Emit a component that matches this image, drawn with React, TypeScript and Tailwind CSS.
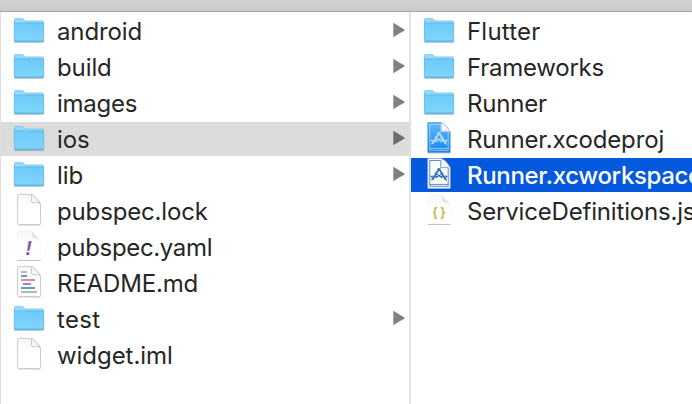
type Kind = "folder" | "blank" | "yaml" | "markdown" | "project" | "workspace" | "json";

interface Entry {
  name: string;
  kind: Kind;
  tracking: string;
  selection?: "gray" | "blue";
}

const left: Entry[] = [
  { name: "android", kind: "folder", tracking: "tracking-[-0.12px]" },
  { name: "build", kind: "folder", tracking: "tracking-[-0.1px]" },
  { name: "images", kind: "folder", tracking: "tracking-[-0.25px]" },
  { name: "ios", kind: "folder", tracking: "tracking-[-0.1px]", selection: "gray" },
  { name: "lib", kind: "folder", tracking: "tracking-[-0.1px]" },
  { name: "pubspec.lock", kind: "blank", tracking: "tracking-[-0.15px]" },
  { name: "pubspec.yaml", kind: "yaml", tracking: "tracking-[-0.34px]" },
  { name: "README.md", kind: "markdown", tracking: "tracking-[-0.15px]" },
  { name: "test", kind: "folder", tracking: "tracking-[0.3px]" },
  { name: "widget.iml", kind: "blank", tracking: "tracking-[-0.05px]" },
];

const right: Entry[] = [
  { name: "Flutter", kind: "folder", tracking: "tracking-[0.2px]" },
  { name: "Frameworks", kind: "folder", tracking: "tracking-[-0.25px]" },
  { name: "Runner", kind: "folder", tracking: "tracking-[-0.2px]" },
  { name: "Runner.xcodeproj", kind: "project", tracking: "tracking-[-0.14px]" },
  { name: "Runner.xcworkspace", kind: "workspace", tracking: "tracking-[-0.34px]", selection: "blue" },
  { name: "ServiceDefinitions.json", kind: "json", tracking: "tracking-[-0.18px]" },
];

function Gradients() {
  return (
    <svg className="absolute size-0" aria-hidden="true">
      <defs>
        <linearGradient id="folderFront" x1="0" y1="0" x2="0" y2="1">
          <stop offset="0" stopColor="#6dcbf8" />
          <stop offset="1" stopColor="#82d5fb" />
        </linearGradient>
        <linearGradient id="paper" x1="0" y1="0" x2="0" y2="1">
          <stop offset="0" stopColor="#f7f7f7" />
          <stop offset="0.5" stopColor="#ffffff" />
        </linearGradient>
        <linearGradient id="blueprint" x1="0" y1="0" x2="0" y2="1">
          <stop offset="0" stopColor="#5dbcf8" />
          <stop offset="1" stopColor="#1a82f4" />
        </linearGradient>
        <linearGradient id="faintFold" x1="0" y1="1" x2="1" y2="0">
          <stop offset="0" stopColor="#d4d4d4" />
          <stop offset="0.6" stopColor="#f4f4f4" />
        </linearGradient>
      </defs>
    </svg>
  );
}

function Folder() {
  return (
    <svg className="size-8" viewBox="0 0 32 32">
      <path d="M1.5 28.600h29" stroke="#000" strokeOpacity=".2" />
      <path d="M1 5.500Q1 4.200 2.300 4.200H9q1 0 1.600.8l1 1.200q.5.600 1.400.6h16.600Q31 6.800 31 8v19H1z" fill="#93d9f9" />
      <path d="M1.800 4.400H9.300L12 7H30" stroke="#78bfe2" strokeWidth=".6" fill="none" />
      <path d="M1 9h30v17.700q0 1.300-1.300 1.300H2.300Q1 28 1 26.700z" fill="url(#folderFront)" />
      <path d="M1 9h30" stroke="#5cb3df" strokeWidth=".7" />
      <path d="M1.400 26.500h29.200" stroke="#62bce8" strokeWidth=".6" />
      <path d="M1.500 27.700h29" stroke="#4da4d3" strokeWidth=".7" />
      <path d="M1.300 6v21.300M30.700 9v18.300" stroke="#5db4de" strokeWidth=".6" />
    </svg>
  );
}

function Sheet({ faint }: { faint?: boolean }) {
  if (faint) {
    return (
      <>
        <path d="M4.700.500H18.500L27.500 9.500V30H4.700z" fill="url(#paper)" stroke="#f7f7f7" strokeWidth=".6" />
        <path d="M18.500.700l.7 5.600q.3 2 2 2.200l6.300 1z" fill="url(#faintFold)" />
        <path d="M4.500 30.500h23" stroke="#c4c4c4" strokeWidth="1" />
      </>
    );
  }
  return (
    <>
      <path d="M5 31.300h22.500" stroke="#000" strokeOpacity=".14" />
      <path
        d="M4.600 1.500Q4.600.500 5.600.500H18.500Q20 1 23 4T27.500 9.500V29.500q0 1-1 1H5.600q-1 0-1-1z"
        fill="url(#paper)"
        stroke="#c6c6c6"
        strokeWidth=".9"
      />
      <path d="M18.500.700V7q0 1.500 1.500 1.500Q24 8 27.200 9.500 23 3 18.500.700z" fill="#fafafa" stroke="#c2c2c2" strokeWidth=".8" />
    </>
  );
}

function Compass({ color }: { color: string }) {
  return (
    <g fill="none" stroke={color} strokeLinecap="round">
      <path d="M15.800 11.300 9.800 21.300M16.300 11.300l6 10" strokeWidth="1.700" />
      <path d="M8.300 18.300h5.200M18.500 18.300h5.300M12 15l7 4.800M20 15l-7 4.800M15 10.800h2.200" strokeWidth="1.100" />
      <path d="M8.300 18.300l1 1.700M23.800 18.300l-1 1.700M8.700 21.800l1-.6M22.400 21.300l1.100.8" strokeWidth="1.100" />
    </g>
  );
}

function FileIcon({ kind }: { kind: Kind }) {
  if (kind === "folder") return <Folder />;
  if (kind === "project" || kind === "workspace") {
    const blue = kind === "project";
    return (
      <svg className="size-8" viewBox="0 0 32 32">
        <path d="M4.700 31h22.600" stroke="#000" strokeOpacity=".25" />
        <path d="M4.900.700H18.500Q24 3.500 27.100 9.800V30.300H4.900z" fill={blue ? "url(#blueprint)" : "#fff"} stroke={blue ? "#2282d2" : "#c9d8ec"} strokeWidth=".7" />
        <path
          d="M6.800 2.500H17.800V9.600H25.200V28.300H6.800zM6.800 26.400H25.200"
          fill="none"
          stroke={blue ? "#a9d8fb" : "#2d6fb2"}
          strokeWidth=".8"
        />
        <Compass color={blue ? "#b9defc" : "#2c6fad"} />
        <path d="M18.300.700V8q0 1.300 1.300 1.300Q24 8.500 27.100 9.800 24 3.500 18.300.700z" fill="#f5f7f9" stroke="#c2ccd5" strokeWidth=".7" />
      </svg>
    );
  }
  return (
    <svg className="size-8" viewBox="0 0 32 32">
      <Sheet faint={kind === "yaml" || kind === "json"} />
      {kind === "yaml" && (
        <text x="12.200" y="24.700" fill="#8a55b3" className="font-['Liberation_Sans',sans-serif] text-[20px] font-bold italic">!</text>
      )}
      {kind === "json" && (
        <g fill="#b9bd3c" className="font-['Liberation_Sans',sans-serif] text-[12px] font-bold">
          <text x="9.800" y="21.800">{"{"}</text>
          <text x="17.600" y="21.800">{"}"}</text>
        </g>
      )}
      {kind === "markdown" && (
        <g strokeWidth="1.900">
          <path d="M8 6h6M8 26h16" stroke="#b8b8b8" />
          <path d="M8 10h6M8 22h14" stroke="#50a9b7" />
          <path d="M8 14h14" stroke="#d7898e" />
          <path d="M10 18h8" stroke="#a272ff" />
        </g>
      )}
    </svg>
  );
}

function Row({ entry, arrow }: { entry: Entry; arrow: boolean }) {
  const bg =
    entry.selection === "gray" ? "bg-[#dcdcdc]" : entry.selection === "blue" ? "bg-[#0559df] font-medium text-white" : "";
  return (
    <div className={`flex h-[34px] shrink-0 items-center pr-1 pl-3 ${bg}`}>
      <span className="mb-0.5 h-8 w-8 shrink-0">
        <FileIcon kind={entry.kind} />
      </span>
      <span className={`ml-3 grow pt-0.5 text-2xl leading-[34px] whitespace-nowrap ${entry.tracking}`}>{entry.name}</span>
      {arrow && (
        <svg className="mb-0.5 h-4 w-3 shrink-0" viewBox="0 0 12 16">
          <path
            d="M.300 1.600Q.300.800 1.100 1.200L11.400 7.400Q12.200 8 11.400 8.600L1.100 14.800Q.300 15.200 .300 14.400z"
            fill={entry.selection ? "#6c6c6c" : "#808080"}
          />
        </svg>
      )}
    </div>
  );
}

function Column({ entries, arrows }: { entries: Entry[]; arrows: boolean }) {
  return (
    <div className="flex flex-col gap-0.5 pt-0.5">
      {entries.map((entry) => (
        <Row key={entry.name} entry={entry} arrow={arrows && entry.kind === "folder"} />
      ))}
    </div>
  );
}

export default function App() {
  return (
    <div className="flex h-[404px] w-[692px] flex-col overflow-hidden bg-white font-['Inter',sans-serif] text-[#262626]">
      <Gradients />
      <div className="h-3 shrink-0 border-b border-[#a6a6a6] bg-linear-to-b from-[#d1d1d1] to-[#cbcbcb]" />
      <div className="flex grow">
        <div className="w-[411px] shrink-0 border-r-2 border-l border-r-[#e2e2e2] border-l-[#dedede]">
          <Column entries={left} arrows />
        </div>
        <div className="w-[281px] shrink-0 overflow-hidden">
          <Column entries={right} arrows={false} />
        </div>
      </div>
    </div>
  );
}
